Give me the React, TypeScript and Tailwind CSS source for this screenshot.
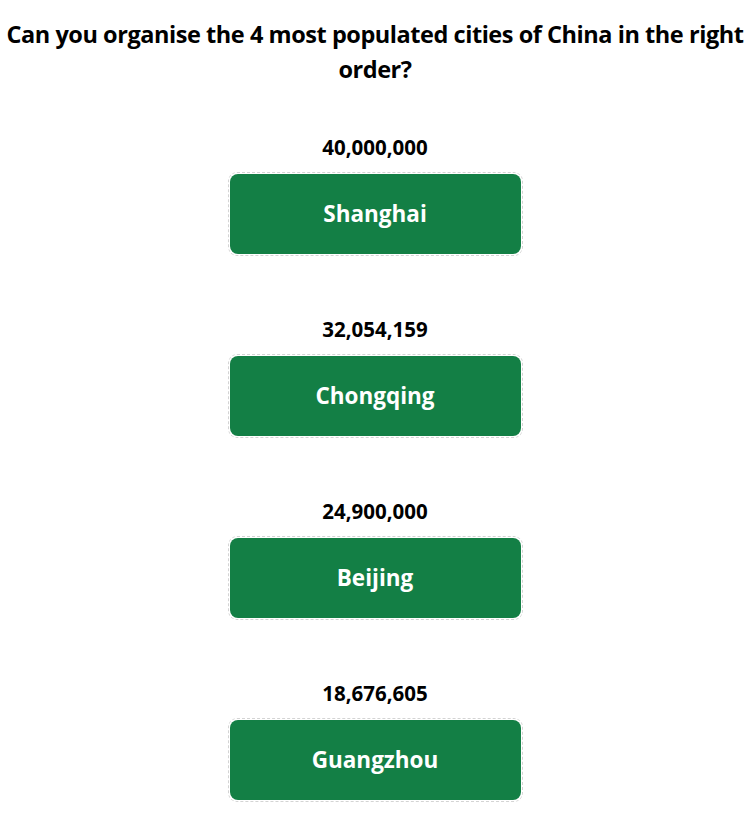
import React from 'react';

const cities = [
  { population: '40,000,000', name: 'Shanghai' },
  { population: '32,054,159', name: 'Chongqing' },
  { population: '24,900,000', name: 'Beijing' },
  { population: '18,676,605', name: 'Guangzhou' },
];

export default function App() {
  return (
    <div
      className="min-h-screen bg-white text-black"
      style={{ fontFamily: '"Open Sans", "Noto Sans", Arial, sans-serif' }}
    >
      <h1 className="pt-[17px] text-center text-[23.5px] font-bold leading-[35px] tracking-[-0.45px]">
        Can you organise the 4 most populated cities of China in the right order?
      </h1>
      <ul className="mt-[47px] flex flex-col items-center gap-[60px]">
        {cities.map((city) => (
          <li key={city.name} className="flex flex-col items-center">
            <span className="text-[20.5px] font-bold leading-[26px]">{city.population}</span>
            <div className="mt-[12px] rounded-[9px] border border-dashed border-[#d4d4d4] p-px">
              <div className="flex h-[80px] w-[291px] items-center justify-center rounded-[8px] bg-[#137f45] text-[22.5px] font-bold text-white">
                {city.name}
              </div>
            </div>
          </li>
        ))}
      </ul>
    </div>
  );
}
